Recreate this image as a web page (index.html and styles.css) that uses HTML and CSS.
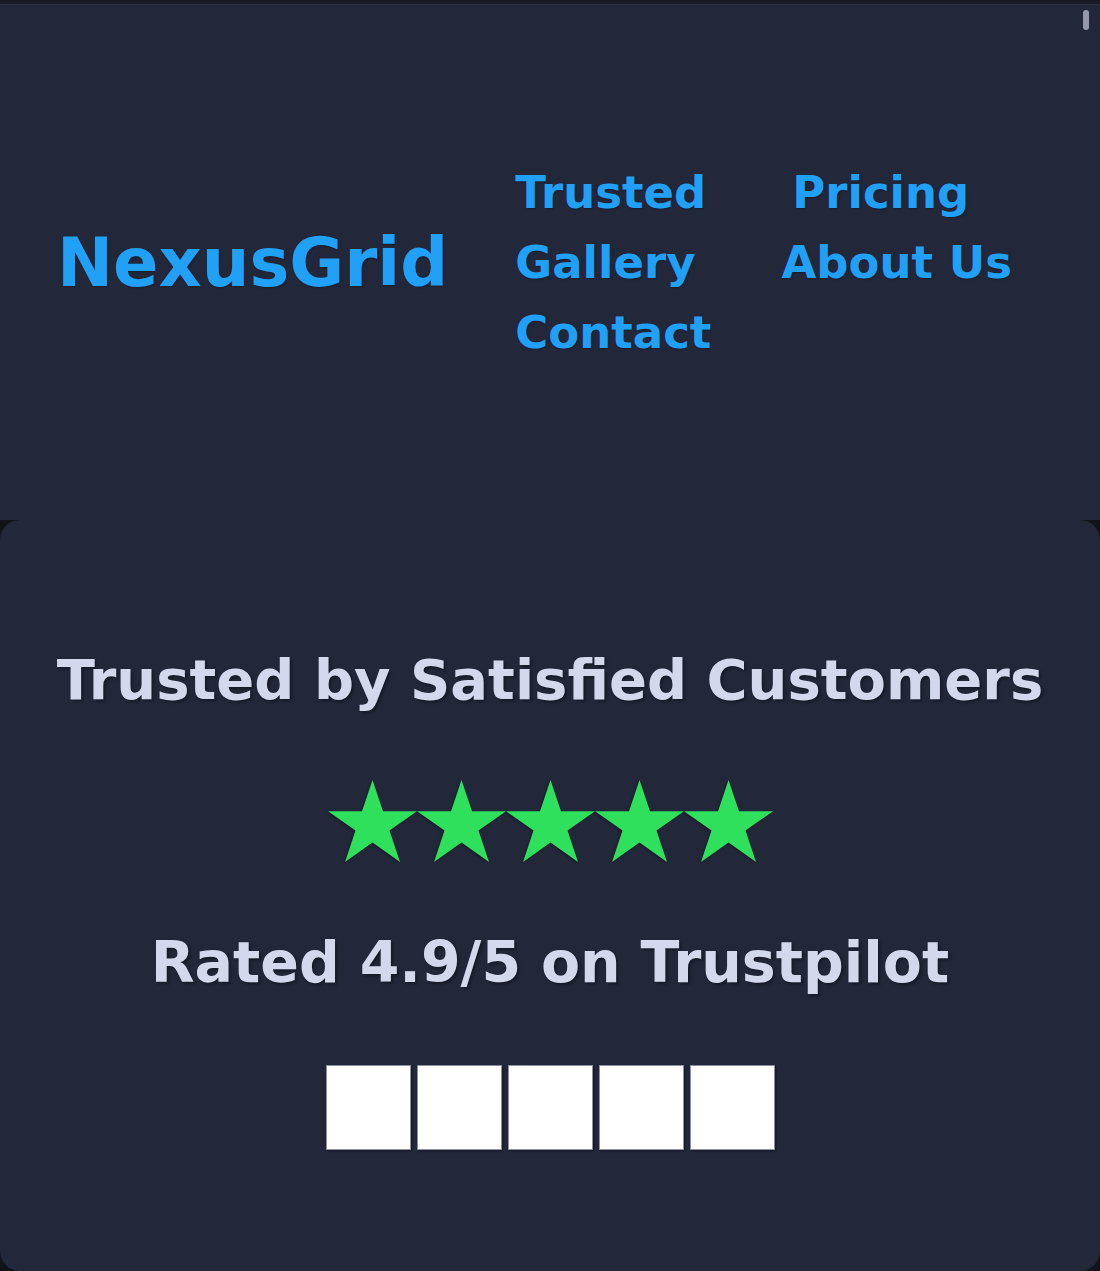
FILE: index.html
```html
<!DOCTYPE html>
<html lang="en">
<head>
    <meta charset="UTF-8">
    <meta name="viewport" content="width=device-width, initial-scale=1.0">
    <title>NexusGrid</title>
    <link rel="stylesheet" href="styles.css">
</head>
<body>
    <header class="site-header">
        <div class="logo">NexusGrid</div>
        <nav class="main-nav">
            <a href="#trusted">Trusted</a>
            <a href="#pricing">Pricing</a>
            <a href="#gallery">Gallery</a>
            <a href="#about">About Us</a>
            <a href="#contact">Contact</a>
        </nav>
    </header>

    <section id="trusted" class="trust">
        <h2>Trusted by Satisfied Customers</h2>
        <div class="stars">
            <svg viewBox="0 0 89 82"><polygon points="44.5,0 55,31.3 89,31.3 61.5,50.6 72,82 44.5,62.6 17,82 27.5,50.6 0,31.3 34,31.3"/></svg>
            <svg viewBox="0 0 89 82"><polygon points="44.5,0 55,31.3 89,31.3 61.5,50.6 72,82 44.5,62.6 17,82 27.5,50.6 0,31.3 34,31.3"/></svg>
            <svg viewBox="0 0 89 82"><polygon points="44.5,0 55,31.3 89,31.3 61.5,50.6 72,82 44.5,62.6 17,82 27.5,50.6 0,31.3 34,31.3"/></svg>
            <svg viewBox="0 0 89 82"><polygon points="44.5,0 55,31.3 89,31.3 61.5,50.6 72,82 44.5,62.6 17,82 27.5,50.6 0,31.3 34,31.3"/></svg>
            <svg viewBox="0 0 89 82"><polygon points="44.5,0 55,31.3 89,31.3 61.5,50.6 72,82 44.5,62.6 17,82 27.5,50.6 0,31.3 34,31.3"/></svg>
        </div>
        <p class="rating">Rated 4.9/5 on Trustpilot</p>
        <div class="badges">
            <span class="badge"></span>
            <span class="badge"></span>
            <span class="badge"></span>
            <span class="badge"></span>
            <span class="badge"></span>
        </div>
    </section>

    <div class="scroll-thumb"></div>
</body>
</html>
```

FILE: styles.css
```css
:root {
    --bg-color: #22273a;
    --page-color: #111318;
    --accent-color: #20a0f6;
    --text-color: #d3d8ec;
    --star-color: #2ee05c;
}
html {
    overflow: hidden;
}
body {
    margin: 0;
    font-family: 'DejaVu Sans', 'Verdana', sans-serif;
    font-weight: bold;
    background-color: var(--page-color);
    border-top: 4px solid #181a24;
}
.site-header {
    display: flex;
    align-items: center;
    height: 515px;
    padding-left: 57px;
    background-color: var(--bg-color);
    border-top: 1px solid #2a2f42;
}
.logo {
    font-size: 67px;
    color: var(--accent-color);
    margin-right: 67px;
    text-shadow: 1px 1px 2px rgba(0, 0, 0, 0.25);
}
.main-nav {
    display: flex;
    flex-wrap: wrap;
    column-gap: 86px;
    width: 540px;
}
.main-nav a {
    font-size: 45px;
    line-height: 70px;
    color: var(--accent-color);
    text-decoration: none;
    text-shadow: 1px 1px 2px rgba(0, 0, 0, 0.25);
}
.trust {
    height: 751px;
    box-sizing: border-box;
    padding-top: 127px;
    background-color: var(--bg-color);
    border-radius: 20px;
    text-align: center;
    color: var(--text-color);
}
.trust h2 {
    margin: 0 0 68px;
    font-size: 56px;
    text-shadow: 2px 2px 3px rgba(0, 0, 0, 0.35);
}
.stars {
    display: flex;
    justify-content: center;
    height: 82px;
    margin-bottom: 67px;
}
.stars svg {
    width: 89px;
    height: 82px;
    fill: var(--star-color);
    filter: drop-shadow(-1px 1px 1px rgba(0, 0, 0, 0.35));
}
.rating {
    margin: 0 0 70px;
    font-size: 57px;
    text-shadow: 2px 2px 3px rgba(0, 0, 0, 0.35);
}
.badges {
    display: flex;
    justify-content: center;
    gap: 6px;
}
.badge {
    width: 85px;
    height: 85px;
    box-sizing: border-box;
    background-color: #fff;
    border: 1px solid #8e93a3;
    box-shadow: 1px 1px 2px rgba(0, 0, 0, 0.4);
}
.scroll-thumb {
    position: absolute;
    top: 10px;
    right: 11px;
    width: 6px;
    height: 20px;
    border-radius: 3px;
    background-color: #9498aa;
}
```
